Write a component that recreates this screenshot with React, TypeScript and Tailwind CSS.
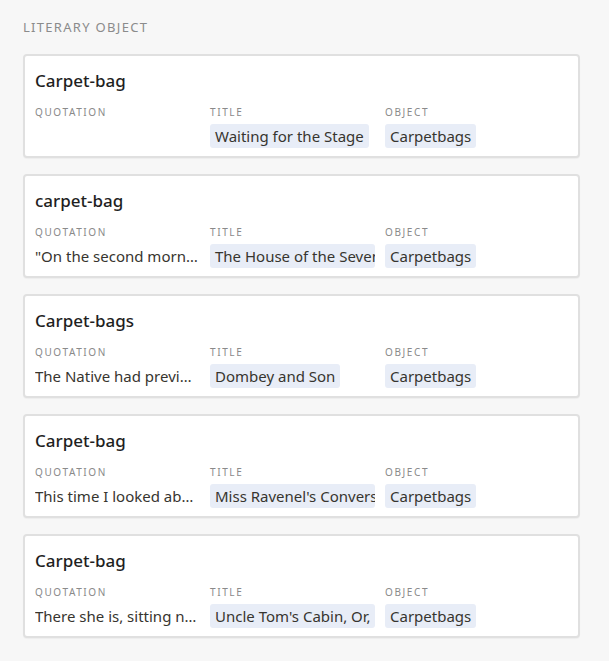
const rows = [
  { name: 'Carpet-bag', quotation: '', title: 'Waiting for the Stage', object: 'Carpetbags' },
  { name: 'carpet-bag', quotation: '"On the second morning of our journey we came to a', title: 'The House of the Seven Gables', object: 'Carpetbags' },
  { name: 'Carpet-bags', quotation: 'The Native had previously taken his carpet-bag', title: 'Dombey and Son', object: 'Carpetbags' },
  { name: 'Carpet-bag', quotation: 'This time I looked about me for the carpet-bag', title: "Miss Ravenel's Conversion from Secession to Loyalty", object: 'Carpetbags' },
  { name: 'Carpet-bag', quotation: 'There she is, sitting now on her carpet-bag', title: "Uncle Tom's Cabin, Or, Life Among the Lowly", object: 'Carpetbags' },
];

const Label = ({ children }: { children: React.ReactNode }) => (
  <div className="text-[10px] leading-[14px] tracking-[0.16em] text-[#8a8a8a] uppercase">{children}</div>
);

const Pill = ({ text }: { text: string }) => (
  <span className="inline-block max-w-full overflow-hidden whitespace-nowrap rounded-[3px] bg-[#e8edf7] px-[5px] text-[15px] leading-[24px] text-[#37352f]">
    {text}
  </span>
);

export default function App() {
  return (
    <div
      className="min-h-[661px] w-[609px] bg-[#f7f7f7] px-[23px] pt-[18px]"
      style={{ fontFamily: '"Segoe UI", "Noto Sans", sans-serif' }}
    >
      <div className="mb-[17px] text-[13px] leading-[19px] tracking-[0.1em] text-[#8b8b8b] uppercase">
        Literary Object
      </div>
      <div className="flex w-[557px] flex-col gap-[16px]">
        {rows.map((r, i) => (
          <div
            key={i}
            className="h-[104px] rounded-[4px] border-2 border-[#e0e0e0] bg-white px-[10px] pt-[13px] shadow-[0_1px_1px_rgba(0,0,0,0.04)]"
          >
            <div className="text-[17px] leading-[24px] font-medium text-[#1f1f1f]">{r.name}</div>
            <div className="mt-[12px] grid grid-cols-[165px_165px_165px] gap-x-[10px]">
              <div className="min-w-0">
                <Label>Quotation</Label>
                <div className="mt-[5px] truncate text-[15px] leading-[24px] text-[#37352f]">{r.quotation}</div>
              </div>
              <div className="min-w-0">
                <Label>Title</Label>
                <div className="mt-[5px]">
                  <Pill text={r.title} />
                </div>
              </div>
              <div className="min-w-0">
                <Label>Object</Label>
                <div className="mt-[5px]">
                  <Pill text={r.object} />
                </div>
              </div>
            </div>
          </div>
        ))}
      </div>
    </div>
  );
}
